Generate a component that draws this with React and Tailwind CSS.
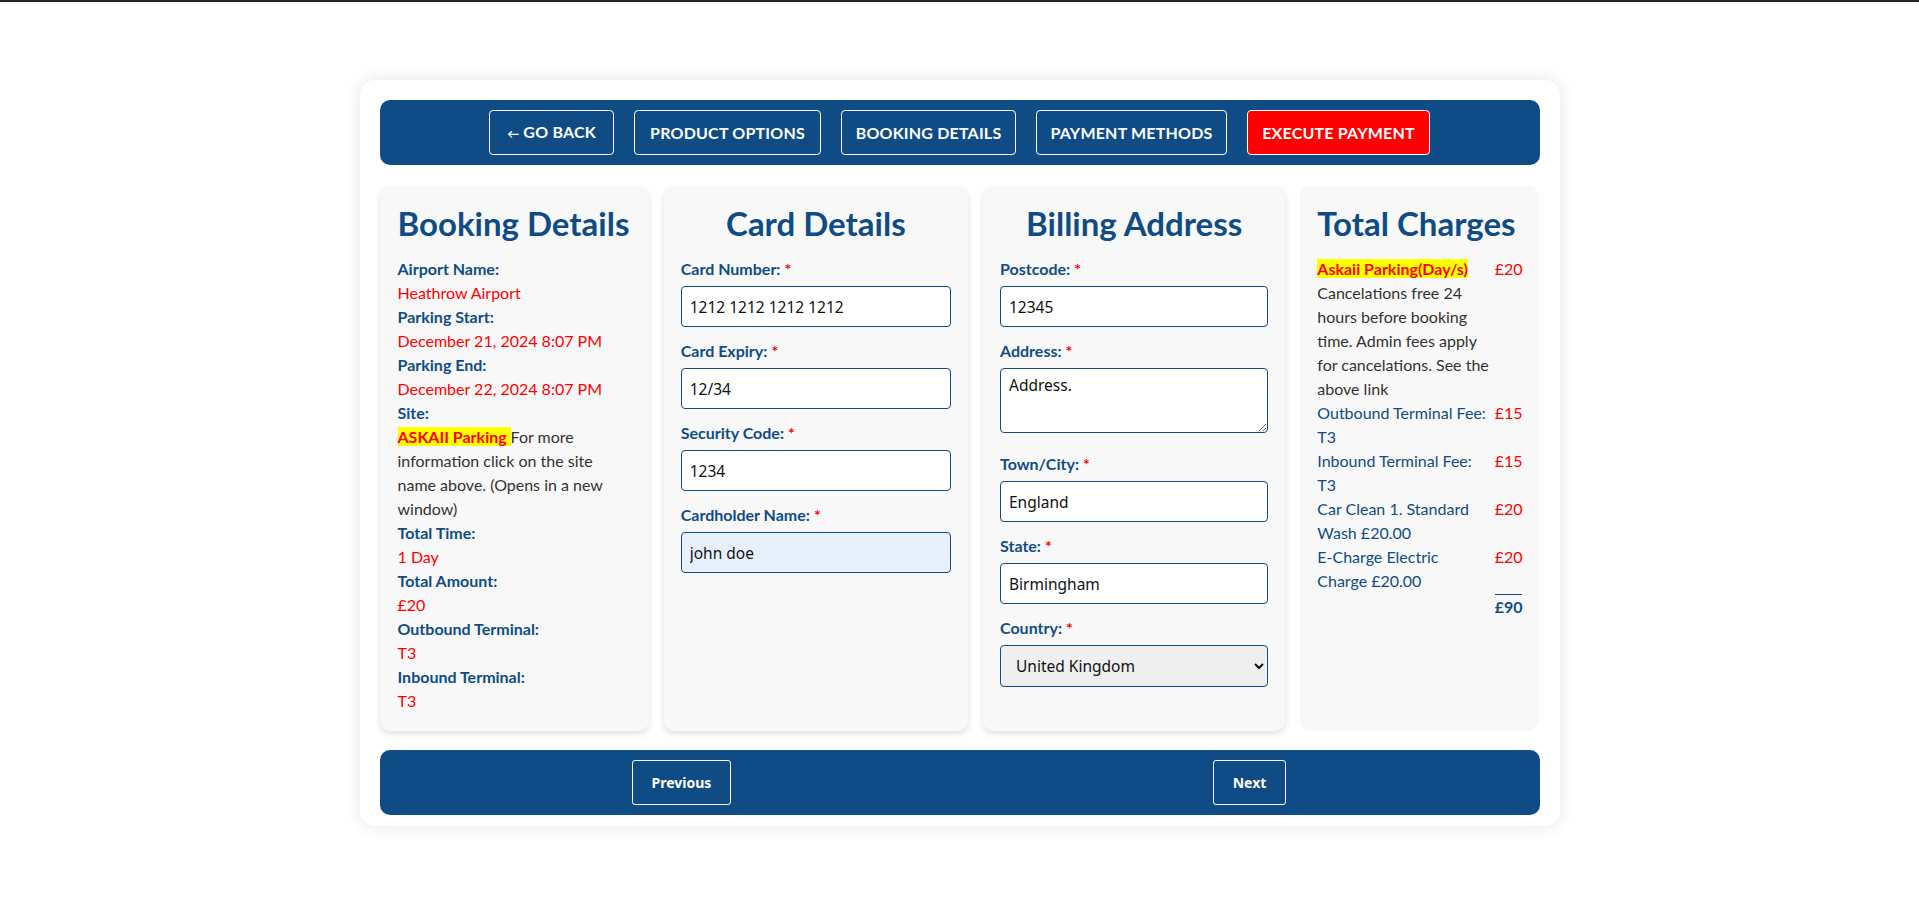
import React from "react";

const Req = () => <span className="text-[#ff0000] ml-[4px]">*</span>;

function Field({ label, value, bg = "bg-white" }) {
  return (
    <div className="mb-[12px]">
      <div className="text-[16px] leading-[24px] font-bold text-[#0f4c85]">
        {label}:<Req />
      </div>
      <input
        readOnly
        value={value}
        className={`mt-[5px] block w-full h-[41px] ${bg} border border-[#0f4c85] rounded-[4px] px-[8px] text-[15.5px] text-[#111] font-['Noto_Sans',sans-serif] outline-none`}
      />
    </div>
  );
}

function BookingItem({ label, value }) {
  return (
    <>
      <div className="font-bold text-[#0f4c85]">{label}</div>
      <div className="text-[#ff0000]">{value}</div>
    </>
  );
}

const navBtn =
  "h-[45px] px-[13px] border border-white rounded-[4px] text-white font-bold text-[16px] uppercase tracking-[0.2px]";

export default function App() {
  return (
    <div className="min-h-screen bg-white font-['Lato',sans-serif] text-[16px] leading-[24px]">
      <div className="h-[2px] bg-[#252525]" />
      <div className="pt-[78px]">
        <div className="mx-auto w-[1200px] bg-white rounded-[15px] shadow-[0_0_18px_rgba(0,0,0,0.10)] px-[20px] pt-[20px] pb-[11px]">
          {/* Top nav */}
          <div className="h-[65px] bg-[#0f4c85] rounded-[10px] flex items-center justify-center gap-[20px]">
            <button className={`${navBtn} w-[125px]`}>
              <span className="text-[12px] mr-[4px]">←</span>GO BACK
            </button>
            <button className={`${navBtn} w-[187px]`}>Product Options</button>
            <button className={`${navBtn} w-[175px]`}>Booking Details</button>
            <button className={`${navBtn} w-[191px]`}>Payment Methods</button>
            <button className={`${navBtn} w-[183px] bg-[#ff0000]`}>Execute Payment</button>
          </div>

          {/* Cards */}
          <div className="mt-[21px] grid grid-cols-[269fr_304fr_302fr_239fr] gap-[15px]">
            {/* Booking Details */}
            <div className="bg-[#f8f8f8] rounded-[10px] shadow-[0_3px_6px_rgba(0,0,0,0.12)] p-[18px]">
              <h2 className="text-[33px] leading-[38px] font-bold text-[#0f4c85] whitespace-nowrap mb-[15px]">
                Booking Details
              </h2>
              <BookingItem label="Airport Name:" value="Heathrow Airport" />
              <BookingItem label="Parking Start:" value="December 21, 2024 8:07 PM" />
              <BookingItem label="Parking End:" value="December 22, 2024 8:07 PM" />
              <div className="font-bold text-[#0f4c85]">Site:</div>
              <div className="text-[#333]">
                <span className="bg-[#ffff00] text-[#ff0000] font-bold">ASKAII Parking{"\u00a0"}</span>For
                more information click on the site name above. (Opens in a new window)
              </div>
              <BookingItem label="Total Time:" value="1 Day" />
              <BookingItem label="Total Amount:" value="£20" />
              <BookingItem label="Outbound Terminal:" value="T3" />
              <BookingItem label="Inbound Terminal:" value="T3" />
            </div>

            {/* Card Details */}
            <div className="bg-[#f8f8f8] rounded-[10px] shadow-[0_3px_6px_rgba(0,0,0,0.12)] p-[17px] pt-[18px]">
              <h2 className="text-[33px] leading-[38px] font-bold text-[#0f4c85] text-center whitespace-nowrap mb-[15px]">
                Card Details
              </h2>
              <Field label="Card Number" value="1212 1212 1212 1212" />
              <Field label="Card Expiry" value="12/34" />
              <Field label="Security Code" value="1234" />
              <Field label="Cardholder Name" value="john doe" bg="bg-[#e8f0fe]" />
            </div>

            {/* Billing Address */}
            <div className="bg-[#f8f8f8] rounded-[10px] shadow-[0_3px_6px_rgba(0,0,0,0.12)] p-[17px] pt-[18px]">
              <h2 className="text-[33px] leading-[38px] font-bold text-[#0f4c85] text-center whitespace-nowrap mb-[15px]">
                Billing Address
              </h2>
              <Field label="Postcode" value="12345" />
              <div className="mb-[19px]">
                <div className="font-bold text-[#0f4c85]">
                  Address:<Req />
                </div>
                <textarea
                  readOnly
                  value="Address."
                  className="mt-[5px] block w-full h-[65px] bg-white border border-[#0f4c85] rounded-[4px] px-[8px] py-[6px] text-[15.5px] leading-[20px] text-[#111] font-['Noto_Sans',sans-serif] outline-none"
                />
              </div>
              <Field label="Town/City" value="England" />
              <Field label="State" value="Birmingham" />
              <div>
                <div className="font-bold text-[#0f4c85]">
                  Country:<Req />
                </div>
                <select
                  defaultValue="United Kingdom"
                  className="mt-[5px] block w-full h-[42px] bg-[#efefef] border border-[#0f4c85] rounded-[4px] pl-[11px] pr-[4px] text-[15.5px] text-[#111] font-['Noto_Sans',sans-serif] outline-none"
                >
                  <option>United Kingdom</option>
                </select>
              </div>
            </div>

            {/* Total Charges */}
            <div className="bg-[#f8f8f8] rounded-[10px] p-[17px] pt-[18px]">
              <h2 className="text-[33px] leading-[38px] font-bold text-[#0f4c85] whitespace-nowrap mb-[15px]">
                Total Charges
              </h2>
              <div className="grid grid-cols-[1fr_auto] gap-x-[4px]">
                <div>
                  <span className="bg-[#ffff00] text-[#ff0000] font-bold">Askaii Parking(Day/s)</span>
                  <div className="text-[#333]">
                    Cancelations free 24 hours before booking time. Admin fees apply for cancelations. See
                    the above link
                  </div>
                </div>
                <div className="text-[#ff0000] text-right">£20</div>
                <div className="text-[#0f4c85]">Outbound Terminal Fee: T3</div>
                <div className="text-[#ff0000] text-right">£15</div>
                <div className="text-[#0f4c85]">Inbound Terminal Fee: T3</div>
                <div className="text-[#ff0000] text-right">£15</div>
                <div className="text-[#0f4c85]">Car Clean 1. Standard Wash £20.00</div>
                <div className="text-[#ff0000] text-right">£20</div>
                <div className="text-[#0f4c85]">E-Charge Electric Charge £20.00</div>
                <div className="text-[#ff0000] text-right">£20</div>
                <div />
                <div className="mt-[1px] border-t border-[#0f4c85] font-bold text-[#0f4c85] text-right">£90</div>
              </div>
            </div>
          </div>

          {/* Footer nav */}
          <div className="mt-[19px] h-[65px] bg-[#0f4c85] rounded-[10px] grid grid-cols-2 items-center">
            <div className="flex justify-center pl-[24px]">
              <button className="h-[45px] px-[19px] border border-white rounded-[3px] text-white font-bold text-[14px] font-['Noto_Sans',sans-serif]">
                Previous
              </button>
            </div>
            <div className="flex justify-center">
              <button className="h-[45px] px-[19px] border border-white rounded-[3px] text-white font-bold text-[14px] font-['Noto_Sans',sans-serif]">
                Next
              </button>
            </div>
          </div>
        </div>
      </div>
    </div>
  );
}
